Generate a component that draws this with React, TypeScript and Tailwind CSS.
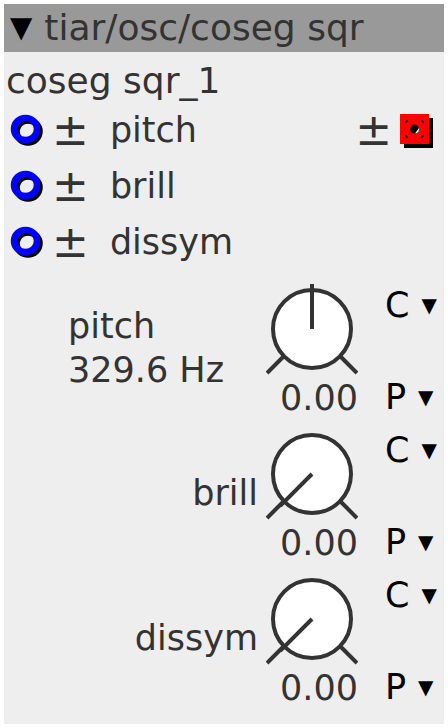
import React from "react";

const Ring = () => (
  <svg width="38" height="38" viewBox="0 0 38 38" className="shrink-0">
    <ellipse cx="18" cy="20.5" rx="11.5" ry="11" fill="none" stroke="#000" strokeWidth="6.5" />
    <ellipse cx="15.5" cy="18" rx="11.5" ry="11" fill="none" stroke="#0000ff" strokeWidth="6.5" />
  </svg>
);

const RedPort = () => (
  <svg width="36" height="38" viewBox="0 0 36 38" className="shrink-0">
    <rect x="6" y="7" width="29" height="30" fill="#000" />
    <rect x="2" y="3" width="29" height="30" fill="#ff0000" />
    <path d="M8 10h2M8 10v2M25 10h-2M25 10v2M8 26h2M8 26v-2M25 26h-2M25 26v-2" stroke="#000" strokeWidth="1.5" />
    <circle cx="16.5" cy="18" r="4.5" fill="#000" />
    <path d="M17 22.5a4.5 4.5 0 0 0 4-5.5z" fill="#fff" />
  </svg>
);

const Knob = ({ angle }: { angle: number }) => {
  const rad = (angle * Math.PI) / 180;
  const x2 = 46 + Math.sin(rad) * 45;
  const y2 = 45 - Math.cos(rad) * 45;
  return (
    <svg width="92" height="92" viewBox="0 0 92 92">
      <circle cx="46" cy="45" r="39" fill="#fff" stroke="#333" strokeWidth="4" />
      <line x1="1" y1="89" x2="17" y2="73" stroke="#333" strokeWidth="4" />
      <line x1="75" y1="73" x2="91" y2="89" stroke="#333" strokeWidth="4" />
      <line x1="46" y1="45" x2={x2} y2={y2} stroke="#333" strokeWidth="4" />
    </svg>
  );
};

const KnobRow = ({ label, sub, angle, wide }: { label: string; sub?: string; angle: number; wide?: boolean }) => (
  <div className="flex h-[145px] items-start">
    <div className={`flex h-[128px] flex-1 flex-col justify-center ${wide ? "items-start pl-[64px]" : "items-end pr-[8px]"}`}>
      <div className="text-[35px] leading-[44px]">{label}</div>
      {sub && <div className="text-[35px] leading-[44px]">{sub}</div>}
    </div>
    <div className="flex w-[92px] flex-col items-end">
      <Knob angle={angle} />
      <div className="mt-[2px] whitespace-nowrap text-[35px] leading-[40px]">0.00</div>
    </div>
    <div className="flex h-[132px] w-[86px] flex-col justify-between pl-[27px] pt-[2px] text-black">
      <div className="flex items-center gap-[12px]">
        <span className="text-[35px] leading-[38px]">C</span>
        <span className="text-[20px]">▼</span>
      </div>
      <div className="flex items-center gap-[12px]">
        <span className="text-[35px] leading-[38px]">P</span>
        <span className="text-[20px]">▼</span>
      </div>
    </div>
  </div>
);

const PortRow = ({ name, out }: { name: string; out?: boolean }) => (
  <div className="flex h-[56px] items-center pl-[6px]">
    <Ring />
    <span className="ml-[4px] text-[44px] leading-none">±</span>
    <span className="ml-[21px] flex-1 text-[35px]">{name}</span>
    {out && (
      <div className="flex items-center pr-[10px]">
        <span className="text-[44px] leading-none">±</span>
        <span className="ml-[6px]">
          <RedPort />
        </span>
      </div>
    )}
  </div>
);

export default function App() {
  return (
    <div className="h-[728px] w-[448px] bg-white p-1 font-['DejaVu_Sans',sans-serif] text-[#333]">
      <div className="flex h-full flex-col bg-[#eeeeee]">
        <div className="flex h-[48px] items-center bg-[#999999] pl-[6px] text-[36px]">
          <span className="text-[29px] text-black">▼</span>
          <span className="ml-[12px] whitespace-nowrap">tiar/osc/coseg sqr</span>
        </div>
        <div className="h-[50px] pl-[2px] pt-[2px] text-[36px]">coseg sqr_1</div>
        <PortRow name="pitch" out />
        <PortRow name="brill" />
        <PortRow name="dissym" />
        <div className="h-[14px]" />
        <KnobRow label="pitch" sub="329.6 Hz" angle={0} wide />
        <KnobRow label="brill" angle={225} />
        <KnobRow label="dissym" angle={225} />
      </div>
    </div>
  );
}
